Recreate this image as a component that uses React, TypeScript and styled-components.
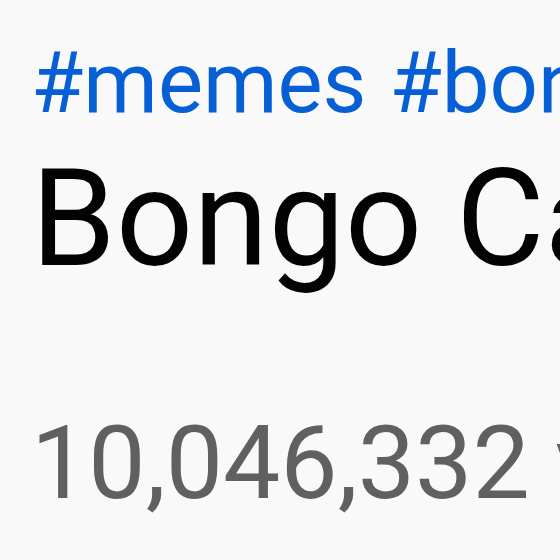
import React from 'react';
import styled, { createGlobalStyle } from 'styled-components';

const GlobalStyle = createGlobalStyle`
    html, body {
        margin: 0;
        padding: 0;
        background-color: #f9f9f9;
    }
`;

const Page = styled.div`
    width: 560px;
    height: 560px;
    overflow: hidden;
    box-sizing: border-box;
    padding: 33px 0 0 31px;
    font-family: Roboto, "Liberation Sans", sans-serif;
    white-space: nowrap;
`;

const Tags = styled.div`
    display: flex;
    gap: 23px;
    font-size: 85px;
    line-height: 100px;
    color: #065fd4;
`;

const Tag = styled.a`
    color: inherit;
    text-decoration: none;
`;

const Title = styled.h1`
    margin: 6px 0 0;
    font-size: 136px;
    font-weight: 400;
    line-height: 160px;
    color: #030303;
`;

const Views = styled.div`
    margin-top: 104px;
    font-size: 102px;
    line-height: 120px;
    color: #606060;
`;

const App: React.FC = () => {
    return (
        <>
            <GlobalStyle />
            <Page>
                <Tags>
                    <Tag href="#">#memes</Tag>
                    <Tag href="#">#bongocat</Tag>
                </Tags>
                <Title>Bongo Cat</Title>
                <Views>10,046,332 views</Views>
            </Page>
        </>
    );
};

export default App;
